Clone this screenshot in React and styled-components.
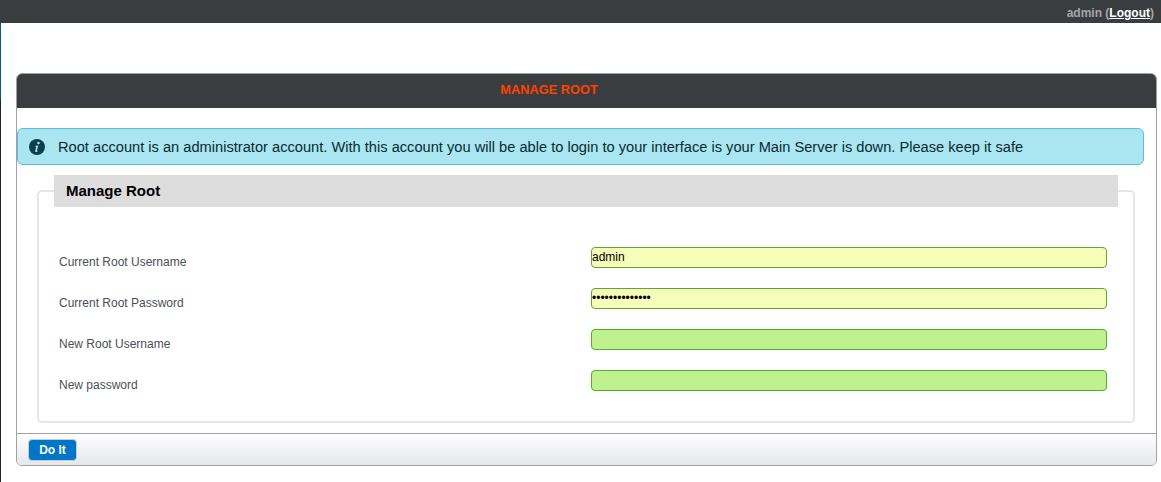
import React from 'react';
import styled, { createGlobalStyle } from 'styled-components';

const GlobalStyle = createGlobalStyle`
  html, body {
    margin: 0;
    padding: 0;
    background: #fff;
    font-family: "Liberation Sans", Arial, sans-serif;
  }
`;

const TopBar = styled.div`
  height: 23px;
  background: #3a3d40;
  display: flex;
  align-items: flex-start;
  justify-content: flex-end;
  padding: 5px 7px 0 0;
  box-sizing: border-box;
  font-size: 12px;
  font-weight: bold;
  line-height: 16px;
  color: #a5a5a5;
`;

const LogoutLink = styled.a`
  color: #fff;
  text-decoration: underline;
`;

const Page = styled.div`
  height: 459px;
  padding: 50px 4px 0 15px;
  box-sizing: border-box;
  border-left: 1px solid;
  border-image: linear-gradient(#005d8f 0 77px, #222 77px) 1;
`;

const Panel = styled.div`
  height: 393px;
  box-sizing: border-box;
  border: 1px solid #a0a0aa;
  border-radius: 6px;
  display: flex;
  flex-direction: column;
  overflow: hidden;
`;

const PanelHeader = styled.div`
  height: 34px;
  flex-shrink: 0;
  background: #3a3d40;
  color: #ff4200;
  font-size: 12.8px;
  font-weight: bold;
  line-height: 32px;
  text-align: center;
  padding-right: 75px;
`;

const PanelBody = styled.div`
  flex: 1;
  padding: 20px 12px 0 0;
`;

const Alert = styled.div`
  height: 37px;
  box-sizing: border-box;
  background: #a9e6f2;
  border: 1px solid #5ebcd9;
  border-radius: 6px;
  display: flex;
  align-items: center;
  gap: 13px;
  padding-left: 11px;
  font-size: 14.65px;
  color: #0a2a33;
`;

const FieldGroup = styled.fieldset`
  margin: 10px 9px 0 20px;
  padding: 0;
  height: 248px;
  box-sizing: border-box;
  border: 2px solid #e6e6e6;
  border-radius: 5px;
`;

const GroupTitle = styled.legend`
  box-sizing: border-box;
  width: 1064px;
  height: 32px;
  margin-left: 15px;
  padding: 0 0 0 12px;
  background: #dddddd;
  font-size: 15px;
  font-weight: bold;
  line-height: 32px;
  color: #000;
`;

const Rows = styled.div`
  display: flex;
  flex-direction: column;
  gap: 20px;
  padding: 40px 26px 0 20px;
`;

const Row = styled.div`
  display: flex;
  justify-content: space-between;
  height: 21px;
`;

const Label = styled.label`
  font-size: 12px;
  line-height: 14px;
  padding-top: 8px;
  color: #4a5055;
`;

const Input = styled.input`
  width: 516px;
  height: 21px;
  box-sizing: border-box;
  margin: 0;
  padding: 0 0 1px 0;
  border: 1px solid #5aa832;
  border-radius: 4px;
  outline: none;
  font-family: "Liberation Sans", Arial, sans-serif;
  font-size: 12px;
  color: #000;
  background: ${(p) => (p.$filled ? '#f5fdb9' : '#bef28e')};
`;

const PanelFooter = styled.div`
  height: 32px;
  flex-shrink: 0;
  margin-top: auto;
  box-sizing: border-box;
  border-top: 1px solid #a0a0aa;
  background: linear-gradient(#ffffff, #e6e7eb);
  padding: 5px 0 0 11px;
`;

const SubmitButton = styled.button`
  display: block;
  width: 49px;
  height: 22px;
  padding: 0 0 1px;
  border: 1px solid #c8ccd2;
  border-radius: 4px;
  background: #0076c8;
  color: #fff;
  font-family: "Liberation Sans", Arial, sans-serif;
  font-size: 12px;
  font-weight: bold;
`;

function InfoIcon() {
  return (
    <svg width="16" height="16" viewBox="0 0 16 16" aria-hidden="true" style={{ flexShrink: 0 }}>
      <circle cx="8" cy="8" r="8" fill="#0d3f4c" />
      <circle cx="9.5" cy="3.9" r="1.25" fill="#a9e6f2" />
      <path
        d="M6.5 6.7 L9.3 6.4 L7.9 11.6 Q7.8 12.2 8.9 11.6 L9.1 12 Q7.7 13 6.7 12.9 Q5.9 12.8 6.2 11.7 L7.2 7.9 L6.4 7.4 Z"
        fill="#a9e6f2"
      />
    </svg>
  );
}

const fields = [
  { label: 'Current Root Username', type: 'text', value: 'admin' },
  { label: 'Current Root Password', type: 'password', value: 'adminadminadmi' },
  { label: 'New Root Username', type: 'text', value: '' },
  { label: 'New password', type: 'password', value: '' },
];

export default function App() {
  return (
    <>
      <GlobalStyle />
      <TopBar>
        <span>
          admin (<LogoutLink href="#">Logout</LogoutLink>)
        </span>
      </TopBar>
      <Page>
        <Panel>
          <PanelHeader>MANAGE ROOT</PanelHeader>
          <PanelBody>
            <Alert>
              <InfoIcon />
              Root account is an administrator account. With this account you will be able to login to your interface is your Main Server is down. Please keep it safe
            </Alert>
            <FieldGroup>
              <GroupTitle>Manage Root</GroupTitle>
              <Rows>
                {fields.map((f) => (
                  <Row key={f.label}>
                    <Label>{f.label}</Label>
                    <Input type={f.type} defaultValue={f.value} $filled={!!f.value} />
                  </Row>
                ))}
              </Rows>
            </FieldGroup>
          </PanelBody>
          <PanelFooter>
            <SubmitButton>Do It</SubmitButton>
          </PanelFooter>
        </Panel>
      </Page>
    </>
  );
}
